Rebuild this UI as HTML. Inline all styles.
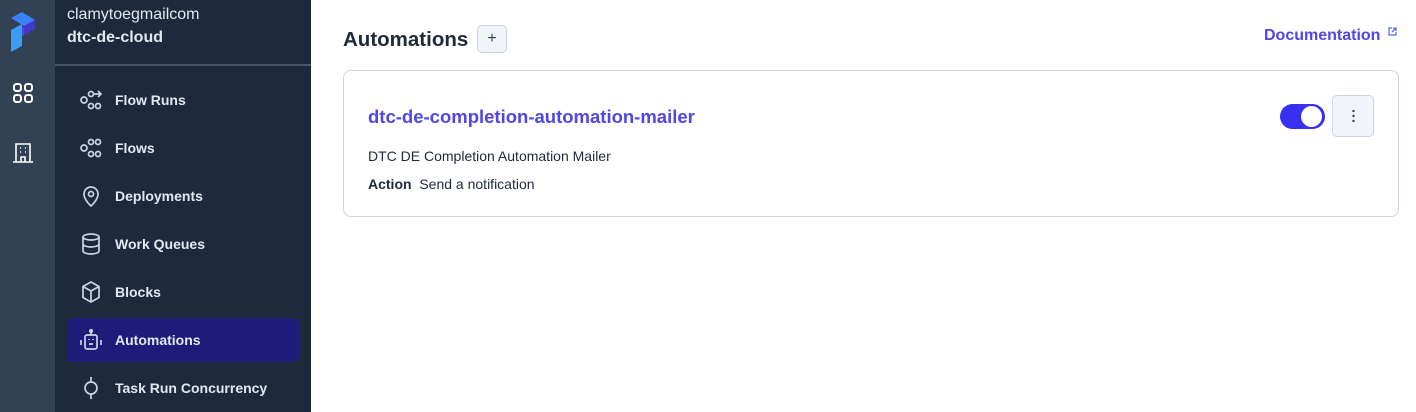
<!DOCTYPE html>
<html><head><style>
*{box-sizing:border-box;margin:0;padding:0}
body{width:1416px;height:412px;overflow:hidden;font-family:"Liberation Sans",sans-serif;background:#fff;position:relative}
.rail{position:absolute;left:0;top:0;width:55px;height:412px;background:#334155}
.side{position:absolute;left:55px;top:0;width:256px;height:412px;background:#1e293b;color:#e2e8f0}
.hdr{height:66px;border-bottom:2px solid #475569;padding:6px 12px}
.nav{position:absolute;left:12px;width:232px;height:44px;display:flex;align-items:center;font-size:14px;font-weight:bold;color:#e2e8f0}
.nav svg{position:absolute;left:12px}
.nav span{margin-left:48px}
.act{background:#1e1b7a;border-radius:6px}
</style></head><body>
<div class="rail">
<svg style="position:absolute;left:0;top:0" width="55" height="60" viewBox="0 0 55 60"><path d="M11 18 L22 12 L35 20 L24 26 Z" fill="#3b82f6"/><path d="M24 26 L35 20 L35 29 L24 35 Z" fill="#4338ca"/><path d="M22 26 L24 27 L24 35 L22 36Z" fill="#4f46e5"/><path d="M11 30 L22 24 L22 46 L11 52 Z" fill="#3b9cf6"/></svg>
<svg style="position:absolute;left:13px;top:83px" width="20" height="20" viewBox="0 0 20 20" fill="none" stroke="#fff" stroke-width="2"><rect x="1" y="1" width="7" height="7" rx="2.5"/><rect x="12" y="1" width="7" height="7" rx="2.5"/><rect x="1" y="12" width="7" height="7" rx="2.5"/><rect x="12" y="12" width="7" height="7" rx="2.5"/></svg>
<svg style="position:absolute;left:13px;top:142px" width="20" height="21" viewBox="0 0 20 21" fill="none" stroke="#fff" stroke-width="1.6"><path d="M0 20H20M3 20V2H17V20M8 20V15H12V20M7 6h1M12 6h1M7 10h1M12 10h1"/></svg>
</div>
<div class="side">
<div class="hdr"><div style="font-size:16px;color:#e2e8f0">clamytoegmailcom</div><div style="font-size:16px;font-weight:bold;margin-top:5px">dtc-de-cloud</div></div>
<div class="nav" style="top:78px"><svg width="24" height="24" viewBox="0 0 24 24" fill="none" stroke="#cbd5e1" stroke-width="1.7"><circle cx="5" cy="12" r="3"/><circle cx="12" cy="18" r="2.5"/><circle cx="19" cy="18" r="2.5"/><circle cx="12" cy="6" r="2.5"/><path d="M15 6h7M19 3l3 3-3 3"/></svg><span>Flow Runs</span></div>
<div class="nav" style="top:126px"><svg width="24" height="24" viewBox="0 0 24 24" fill="none" stroke="#cbd5e1" stroke-width="1.7"><circle cx="5" cy="12" r="3"/><circle cx="12" cy="18" r="2.5"/><circle cx="19" cy="18" r="2.5"/><circle cx="12" cy="6" r="2.5"/><circle cx="19" cy="6" r="2.5"/></svg><span>Flows</span></div>
<div class="nav" style="top:174px"><svg width="24" height="24" viewBox="0 0 24 24" fill="none" stroke="#cbd5e1" stroke-width="1.7"><path d="M12 22s7-6 7-12a7 7 0 0 0-14 0c0 6 7 12 7 12z"/><circle cx="12" cy="10" r="2.5"/></svg><span>Deployments</span></div>
<div class="nav" style="top:222px"><svg width="24" height="24" viewBox="0 0 24 24" fill="none" stroke="#cbd5e1" stroke-width="1.7"><ellipse cx="12" cy="5" rx="8" ry="3"/><path d="M4 5v14c0 1.7 3.6 3 8 3s8-1.3 8-3V5M4 12c0 1.7 3.6 3 8 3s8-1.3 8-3"/></svg><span>Work Queues</span></div>
<div class="nav" style="top:270px"><svg width="24" height="24" viewBox="0 0 24 24" fill="none" stroke="#cbd5e1" stroke-width="1.7"><path d="M12 2l8 4.5v11L12 22l-8-4.5v-11zM4 6.5l8 4.5 8-4.5M12 11v11"/></svg><span>Blocks</span></div>
<div class="nav act" style="top:318px"><svg width="24" height="24" viewBox="0 0 24 24" fill="none" stroke="#cbd5e1" stroke-width="1.7"><rect x="6" y="7" width="12" height="14" rx="2"/><circle cx="12" cy="3" r="1.2" fill="#cbd5e1"/><path d="M12 4v3M2 12v5M22 12v5M10 11v1M14 11v1M10 16h4"/></svg><span>Automations</span></div>
<div class="nav" style="top:366px"><svg width="24" height="24" viewBox="0 0 24 24" fill="none" stroke="#cbd5e1" stroke-width="1.7"><circle cx="12" cy="12" r="6"/><path d="M12 1v5M12 18v5"/></svg><span>Task Run Concurrency</span></div>
</div>
<div style="position:absolute;left:343px;top:28px;font-size:20.5px;font-weight:bold;color:#1e293b">Automations</div>
<div style="position:absolute;left:477px;top:25px;width:30px;height:28px;border:1px solid #cbd5e1;border-radius:5px;background:#f1f5f9;text-align:center;line-height:25px;font-size:16px;color:#334155">+</div>
<div style="position:absolute;left:1264px;top:27px;font-size:16px;font-weight:bold;color:#4f46e5">Documentation</div>
<svg style="position:absolute;left:1388px;top:27px" width="9" height="9" viewBox="0 0 9 9" fill="none" stroke="#6366f1" stroke-width="1.3"><path d="M4 1H1v7h7V5M5 1h3v3M8 1L4 5"/></svg>
<div style="position:absolute;left:343px;top:70px;width:1056px;height:147px;border:1px solid #cbd5e1;border-radius:8px">
<div style="position:absolute;left:24px;top:35px;font-size:18.5px;font-weight:bold;color:#4f46e5">dtc-de-completion-automation-mailer</div>
<div style="position:absolute;left:24px;top:77px;font-size:14px;color:#1e293b">DTC DE Completion Automation Mailer</div>
<div style="position:absolute;left:24px;top:105px;font-size:14px;color:#1e293b"><b>Action</b>&nbsp;&nbsp;Send a notification</div>
<div style="position:absolute;left:936px;top:33px;width:45px;height:25px;border-radius:13px;background:#3730f0"><div style="position:absolute;right:3px;top:2px;width:21px;height:21px;border-radius:50%;background:#fff"></div></div>
<div style="position:absolute;left:988px;top:24px;width:42px;height:42px;border:1px solid #cbd5e1;border-radius:5px;background:#f1f5f9"><svg style="position:absolute;left:19px;top:13px" width="3" height="14"><circle cx="1.5" cy="2" r="1.2" fill="#334155"/><circle cx="1.5" cy="7" r="1.2" fill="#334155"/><circle cx="1.5" cy="12" r="1.2" fill="#334155"/></svg></div>
</div>
</body></html>
